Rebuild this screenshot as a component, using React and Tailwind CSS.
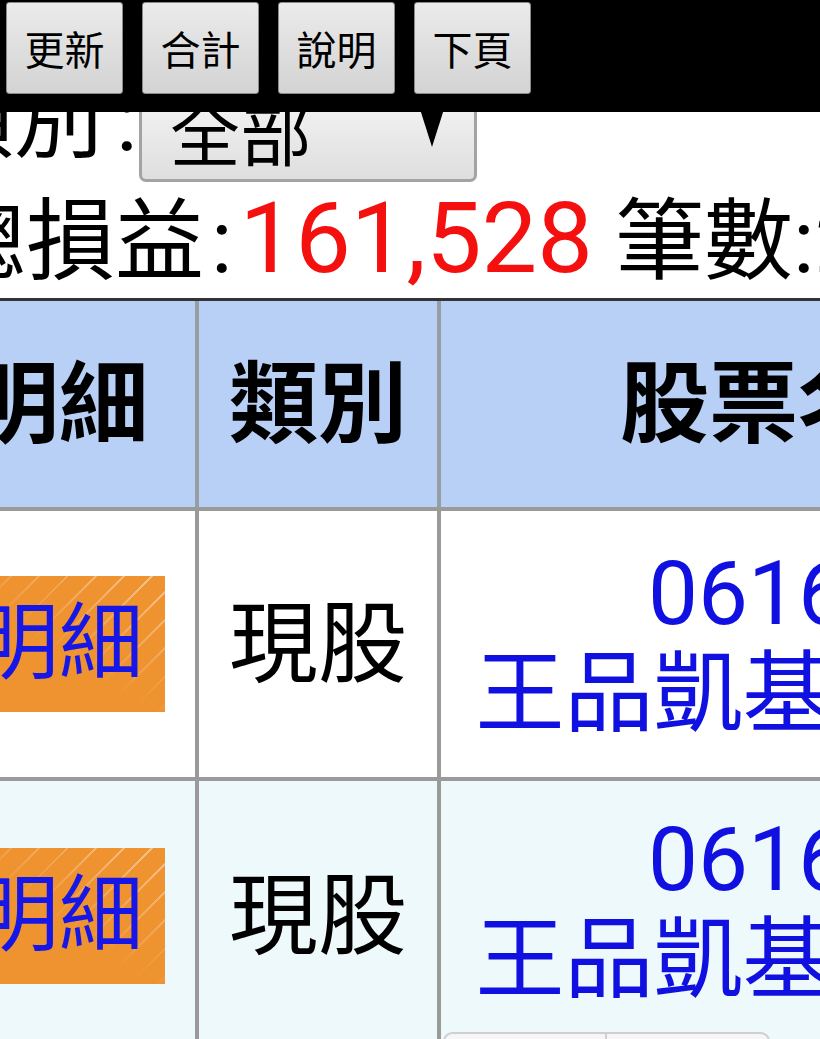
export default function App() {
  const tabs = ["更新", "合計", "說明", "下頁"];

  const DetailBtn = () => (
    <div className="w-[212px] h-[136px] flex items-center justify-center bg-[#ee9330] bg-[linear-gradient(to_top_right,#ee9330_45%,rgba(238,147,48,0)_100%),repeating-linear-gradient(135deg,rgba(255,255,255,0.45)_0_2px,rgba(255,255,255,0)_2px_20px)]">
      <span className="text-[84px] leading-none text-[#1616e6]">明細</span>
    </div>
  );

  return (
    <div className="relative w-[820px] h-[1039px] overflow-hidden bg-white text-black font-['Roboto','Noto_Sans_CJK_TC',sans-serif]">
      {/* fixed toolbar over the page */}
      <div className="absolute top-0 left-0 z-10 w-full h-[112px] bg-black flex items-start gap-[19px] pl-[6px] pt-[2px]">
        {tabs.map((t) => (
          <div
            key={t}
            className="w-[117px] h-[92px] rounded-[3px] border border-[#8a8a8a] bg-linear-to-b from-[#ebebeb] to-[#d3d3d3] flex items-center justify-center text-[40px] leading-none font-['Noto_Sans_CJK_TC',sans-serif]"
          >
            {t}
          </div>
        ))}
      </div>

      <div className="-ml-[77px] w-[1300px]">
        <div className="flex items-end h-[182px] pl-[2px]">
          <span className="text-[89px] leading-none mb-[18px] whitespace-nowrap">
            類別<span className="pl-[13px]">:</span>
          </span>
          <div className="ml-[1px] flex items-end w-[338px] h-[110px] rounded-[7px] border-[3px] border-[#a3a3a3] bg-linear-to-b from-[#fafafa] to-[#dedede] pl-[28px] pb-[14px]">
            <span className="text-[71px] leading-none font-['Noto_Sans_CJK_TC',sans-serif]">全部</span>
            <svg className="ml-auto mr-[23px] mb-[18px]" width="38" height="60" viewBox="0 0 38 60">
              <polygon points="0,0 38,0 19,60" fill="#000" />
            </svg>
          </div>
        </div>

        <div className="whitespace-nowrap pl-[14px] text-[89px] leading-[112px]">
          總損益<span className="px-[7px]">:</span>
          <span className="text-[99px] text-[#f51010]">161,528</span> 筆數:2
        </div>

        <div className="border-t-[3px] border-[#333]">
          <div className="flex h-[210px] bg-[#b8d0f6] border-b-[4px] border-[#9a9a9a] font-bold text-[89px] leading-none">
            <div className="w-[276px] border-r-[4px] border-[#979ea3] flex items-center justify-center">明細</div>
            <div className="w-[242px] border-r-[4px] border-[#979ea3] flex items-center justify-center">類別</div>
            <div className="w-[714px] flex items-center justify-center">股票名稱</div>
          </div>

          <div className="flex h-[270px] bg-white border-b-[4px] border-[#9a9a9a]">
            <div className="w-[276px] border-r-[4px] border-[#9a9a9a] flex items-center justify-center">
              <DetailBtn />
            </div>
            <div className="w-[242px] border-r-[4px] border-[#9a9a9a] flex items-center justify-center text-[89px] leading-none">現股</div>
            <div className="w-[714px] flex flex-col items-center justify-center text-[89px] leading-[100px] text-[#1010e0] whitespace-nowrap">
              <span>061608</span>
              <span>王品凱基58購01</span>
            </div>
          </div>

          <div className="flex h-[270px] bg-[#edf9fb]">
            <div className="w-[276px] border-r-[4px] border-[#9a9a9a] flex items-center justify-center">
              <DetailBtn />
            </div>
            <div className="w-[242px] border-r-[4px] border-[#9a9a9a] flex items-center justify-center text-[89px] leading-none">現股</div>
            <div className="w-[714px] flex flex-col pt-[29px] text-[89px] leading-[100px] text-[#1010e0] whitespace-nowrap">
              <span className="text-center">061608</span>
              <span className="text-center">王品凱基58購01</span>
              <div className="mt-[22px] ml-[2px] flex w-[327px] h-[56px] rounded-[20px] border-2 border-[#cfcfcf] bg-[#f6f6f6]">
                <div className="w-[162px] border-r-2 border-[#cfcfcf]" />
                <div className="flex-1" />
              </div>
            </div>
          </div>
        </div>
      </div>
    </div>
  );
}
